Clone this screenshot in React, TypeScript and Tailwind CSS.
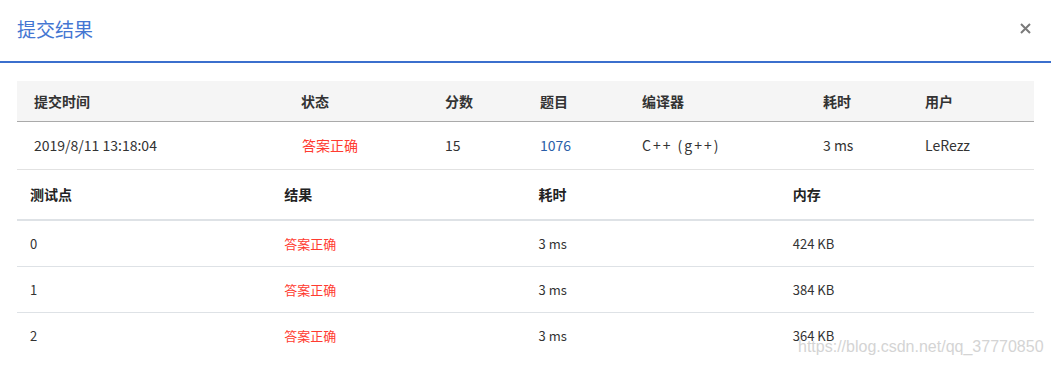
const font = { fontFamily: '"Segoe UI", "Noto Sans CJK SC", "Noto Sans", sans-serif' };

const summary = {
  time: '2019/8/11 13:18:04',
  status: '答案正确',
  score: '15',
  problem: '1076',
  compiler: 'C++ (g++)',
  cost: '3 ms',
  user: 'LeRezz',
};

const cases = [
  { id: '0', result: '答案正确', time: '3 ms', mem: '424 KB' },
  { id: '1', result: '答案正确', time: '3 ms', mem: '384 KB' },
  { id: '2', result: '答案正确', time: '3 ms', mem: '364 KB' },
];

const cols = ['w-[284px] pl-[17px]', 'w-[144px]', 'w-[95px]', 'w-[102px]', 'w-[181px]', 'w-[102px]', 'flex-1'];

const App = () => {
  return (
    <div className="relative w-[1051px] h-[367px] bg-white overflow-hidden text-[#333]" style={font}>
      <div className="h-[63px] flex items-center justify-between pl-[17px] pr-[20px] border-b-2 border-[#3b6fcd]">
        <h1 className="text-[19px] text-[#4476d2] font-normal -mt-[2px]">提交结果</h1>
        <svg width="11" height="11" viewBox="0 0 11 11" className="-mt-[5px]">
          <path d="M1 1L10 10M10 1L1 10" stroke="#7a7a7a" strokeWidth="2" />
        </svg>
      </div>

      <div className="px-[17px] pt-[18px]">
        <div className="flex h-[41px] items-center bg-[#f5f5f5] border-b border-[#aaa] text-[14px] font-bold text-[#333]">
          {['提交时间', '状态', '分数', '题目', '编译器', '耗时', '用户'].map((h, i) => (
            <div key={h} className={cols[i]}>{h}</div>
          ))}
        </div>
        <div className="flex h-[48px] items-center border-b border-[#e2e2e2] text-[14px]">
          <div className={cols[0]}>{summary.time}</div>
          <div className={`${cols[1]} text-[#ff3b30] pl-[1px]`}>{summary.status}</div>
          <div className={cols[2]}>{summary.score}</div>
          <div className={`${cols[3]} text-[#2a5ea8]`}>{summary.problem}</div>
          <div className={`${cols[4]} tracking-[2px]`}>{summary.compiler}</div>
          <div className={cols[5]}>{summary.cost}</div>
          <div className={cols[6]}>{summary.user}</div>
        </div>

        <div className="grid grid-cols-4 h-[51px] items-center border-b-2 border-[#dee2e6] text-[14px] font-bold text-[#222]">
          {['测试点', '结果', '耗时', '内存'].map((h) => (
            <div key={h} className="px-[13px]">{h}</div>
          ))}
        </div>
        {cases.map((c, i) => (
          <div
            key={c.id}
            className={`grid grid-cols-4 h-[46px] items-center text-[13px] ${i < cases.length - 1 ? 'border-b border-[#dee2e6]' : ''}`}
          >
            <div className="px-[13px]">{c.id}</div>
            <div className="px-[13px] text-[#ff3b30]">{c.result}</div>
            <div className="px-[13px]">{c.time}</div>
            <div className="px-[13px]">{c.mem}</div>
          </div>
        ))}
      </div>

      <div
        className="absolute left-[798px] top-[339px] text-[16px] text-[#d4d4d4] leading-none whitespace-nowrap"
        style={{ fontFamily: '"Liberation Sans", Arial, sans-serif' }}
      >
        https://blog.csdn.net/qq_37770850
      </div>
    </div>
  );
};

export default App;
